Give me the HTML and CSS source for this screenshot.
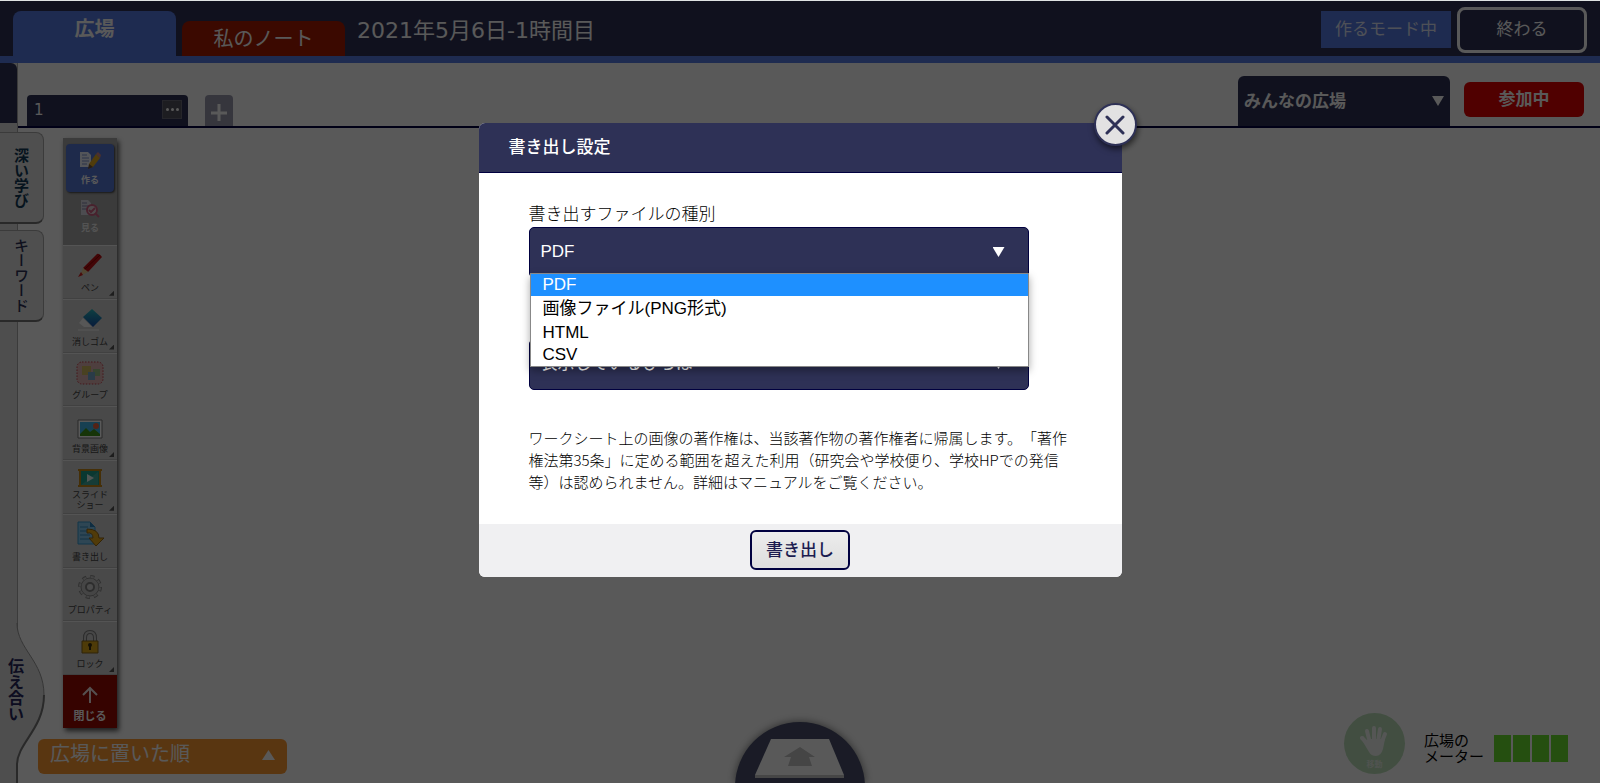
FILE: index.html
```html
<!DOCTYPE html>
<html lang="ja">
<head>
<meta charset="utf-8">
<title>書き出し設定</title>
<link rel="stylesheet" href="styles.css">
</head>
<body>
<div class="page">
  <header class="header">
    <nav class="header-tabs">
      <button class="header-tab header-tab-plaza" type="button">広場</button>
      <button class="header-tab header-tab-note" type="button">私のノート</button>
    </nav>
    <h1 class="lesson">2021年5月6日-1時間目</h1>
    <span class="mode">作るモード中</span>
    <button class="finish" type="button">終わる</button>
  </header>

  <div class="workspace">
    <aside class="rail">
      <div class="rail-head"></div>
      <button class="rail-tab rail-tab-deep" type="button">深い学び</button>
      <button class="rail-tab" type="button">キーワード</button>
      <div class="rail-bulge">
        <svg class="rail-curve" width="46" height="160" viewBox="0 0 46 160" aria-hidden="true">
          <path d="M0 0H17C17 26 44 38 44 72C44 106 17 120 17 142V160H0Z" fill="#dedede"/>
          <path d="M17 0C17 26 44 38 44 72" fill="none" stroke="#999" stroke-width="1"/>
          <path d="M44 72C44 106 17 120 17 142V160" fill="none" stroke="#777" stroke-width="2"/>
        </svg>
        <button class="rail-talk" type="button">伝え合い</button>
      </div>
    </aside>

    <main class="main">
      <div class="tabbar">
        <div class="sheet-tab"><span>1</span><button class="more" type="button" aria-label="メニュー"><i></i><i></i><i></i></button></div>
        <button class="add" type="button" aria-label="追加"><svg width="18" height="18" viewBox="0 0 18 18"><path d="M9 1V18M1 10H17" stroke="#fff" stroke-width="3"/></svg></button>
        <div class="plaza">
          <select class="plaza-select" aria-label="広場"><option>みんなの広場</option></select>
        </div>
        <button class="join" type="button">参加中</button>
      </div>

      <div class="toolbar">
        <div class="modes">
          <button class="tool mode-make" type="button">
            <svg width="22" height="20" viewBox="0 0 22 20"><path d="M1 2H9L12 5V17H1Z" fill="#eef2ff"/><path d="M3 5H8M3 8H10M3 11H10M3 14H8" stroke="#7d93cf"/><path d="M10 14L17 4L21 8L14 17L10 18Z" fill="#e5ab22"/><path d="M17 4L19 2L22 5L21 8Z" fill="#d98b80"/><path d="M10 14L14 17L9 19Z" fill="#715335"/></svg>
            作る</button>
          <button class="tool mode-view" type="button">
            <svg width="22" height="20" viewBox="0 0 22 20"><path d="M2 2H9L12 5V17H2Z" fill="#d9d9e6"/><path d="M3 5H8M3 8H10M3 11H8" stroke="#8584ac"/><circle cx="13" cy="12" r="5" fill="#e3d6db" stroke="#cf6082" stroke-width="2"/><path d="M16 15L20 19M10 12L12 14L16 10" fill="none" stroke="#cf6082" stroke-width="2"/></svg>
            見る</button>
        </div>
        <div class="tools">
          <button class="tool more-tools" type="button">
            <svg width="26" height="26" viewBox="0 0 26 26"><path d="M6 16L20 2Q22 1 25 5L11 20Z" fill="#c01013"/><path d="M7 18L23 3" stroke="#870000" stroke-width="1"/><path d="M6 16L11 20L3 24Z" fill="#e8cb92"/><path d="M4 20L6 23L1 25Z" fill="#d02020"/></svg>
            ペン</button>
          <button class="tool more-tools" type="button">
            <svg width="26" height="24" viewBox="0 0 26 24"><defs><linearGradient id="eraser" x2="0" y2="1"><stop stop-color="#27b5bb"/><stop offset="1" stop-color="#174fac"/></linearGradient></defs><path d="M15 1L25 10L16 19L6 9Z" fill="url(#eraser)"/><path d="M6 10L15 19H7L2 15Z" fill="#f8f8f8"/><path d="M1 22H22" stroke="#f8f8f8"/></svg>
            消しゴム</button>
          <button class="tool" type="button">
            <svg width="28" height="24" viewBox="0 0 28 24"><rect x="1" y="1" width="26" height="22" rx="5" fill="#deb4b4" stroke="#c8404c" stroke-width="1" stroke-dasharray="1.5 1.5"/><path d="M6 5H15V14H6Z" fill="#d0bb5e"/><path d="M17 8H24V15H17Z" fill="#9cc486"/><path d="M12 11H19V19H12Z" fill="#7aa9cb"/></svg>
            グループ</button>
          <button class="tool more-tools" type="button">
            <svg width="26" height="20" viewBox="0 0 26 20"><path d="M1 1H25V19H1Z" fill="#fff" stroke="#777"/><path d="M3 3H23V17H3Z" fill="#43b8ea"/><path d="M3 15L9 9L13 13L17 10L23 15V17H3Z" fill="#3f9619"/><circle cx="19" cy="7" r="3" fill="#ef6541"/></svg>
            背景画像</button>
          <button class="tool more-tools slide" type="button">
            <svg width="24" height="18" viewBox="0 0 24 18"><path d="M2 1H22V17H2Z" fill="#1da08e"/><path d="M3 16L20 3V16Z" fill="#40ad9e"/><path d="M0 1H24M0 17H24M2 1V17M22 1V17" stroke="#c58715" stroke-width="2"/><path d="M9 5V13L16 9Z" fill="#e5f5f1"/></svg>
            <span>スライド<br>ショー</span></button>
          <button class="tool" type="button">
            <svg width="28" height="26" viewBox="0 0 28 26"><path d="M2 1H14L19 6V23H2Z" fill="#83c9f1" stroke="#369bd0"/><path d="M14 1V6H19Z" fill="#2c82b9"/><path d="M4 6H12M4 10H16M4 14H14M4 18H14" stroke="#398fc1"/><path d="M11 8Q23 8 23 17H28L20 25L13 17H17Q17 11 11 12Z" fill="#e9aa1c" stroke="#966815"/></svg>
            書き出し</button>
          <button class="tool" type="button">
            <svg width="26" height="26" viewBox="0 0 26 26"><circle cx="13" cy="13" r="10" fill="none" stroke="#8a8a8a" stroke-width="4" stroke-dasharray="4 3.85"/><circle cx="13" cy="13" r="9" fill="#c5c5c5" stroke="#8a8a8a"/><circle cx="13" cy="13" r="10" fill="none" stroke="#c5c5c5" stroke-width="2" stroke-dasharray="3 4.85" stroke-dashoffset="-.5"/><circle cx="13" cy="13" r="4" fill="#d8d8d8" stroke="#808080" stroke-width="2"/></svg>
            プロパティ</button>
          <button class="tool more-tools" type="button">
            <svg width="18" height="24" viewBox="0 0 18 24"><path d="M4 12V8Q4 2 9 2Q14 2 14 8V12" fill="none" stroke="#7e7e7e" stroke-width="4"/><path d="M4 12V8Q4 2 9 2Q14 2 14 8V12" fill="none" stroke="#ccc" stroke-width="2"/><path d="M1 11H17V23H1Z" fill="#dfaa19" stroke="#85651b"/><circle cx="9" cy="15" r="2" fill="#3b3010"/><path d="M8 16H10V20H8Z" fill="#3b3010"/></svg>
            ロック</button>
        </div>
        <button class="tool close-tools" type="button">
          <svg width="18" height="18" viewBox="0 0 18 18"><path d="M9 17V2M2 9L9 2L16 9" fill="none" stroke="#f3e6e4" stroke-width="2"/></svg>
          閉じる</button>
      </div>
    </main>
  </div>

  <footer class="dock">
    <button class="order" type="button"><span>広場に置いた順</span><i class="up"></i></button>
    <div class="status">
      <button class="move" type="button">
        <svg width="30" height="32" viewBox="0 0 30 32"><path d="M10 20L3 13M11 18L8 6M15 17V3M19 17L21 4M22 19L26 9" stroke="#f2f5f2" stroke-width="4" stroke-linecap="round"/><path d="M1 12L10 27Q12 31 17 31Q22 31 24 24L26 14L20 14H10L9 17L4 11Z" fill="#f2f5f2"/></svg>
        移動</button>
      <span class="meter-label">広場の<br>メーター</span>
      <div class="meter" role="img" aria-label="広場のメーター"><i></i><i></i><i></i><i></i></div>
    </div>
  </footer>
  <button class="tray" type="button" aria-label="提出">
    <svg width="130" height="61" viewBox="0 0 130 61"><circle cx="65" cy="65" r="65" fill="#4a4f6d"/><path d="M36 17H94L109 53V56H20V53Z" fill="#fff"/><path d="M20 53H109V56H20Z" fill="#c9c9c9"/><path d="M65 25L80 35H74L77 44H53L56 35H49Z" fill="#c5c5c5"/></svg>
  </button>
</div>

<div class="overlay">
  <form class="modal" role="dialog" aria-labelledby="modal-title">
    <div class="modal-head"><h2 id="modal-title">書き出し設定</h2></div>
    <button class="modal-close" type="button" aria-label="閉じる"><svg width="20" height="20" viewBox="0 0 20 20"><path d="M2 2L18 18M18 2L2 18" stroke="#2e3156" stroke-width="3" stroke-linecap="round"/></svg></button>
    <div class="modal-body">
      <label class="field-label" for="kind">書き出すファイルの種別</label>
      <div class="field">
        <select class="field-select" id="kind"><option>PDF</option></select>
        <ul class="options" role="listbox">
          <li class="option selected" role="option" aria-selected="true">PDF</li>
          <li class="option option-tall" role="option">画像ファイル(PNG形式)</li>
          <li class="option" role="option">HTML</li>
          <li class="option" role="option">CSV</li>
        </ul>
      </div>
      <div class="field field-target">
        <select class="field-select" aria-label="対象"><option>表示しているひろば</option></select>
      </div>
      <p class="notice">ワークシート上の画像の著作権は、当該著作物の著作権者に帰属します。「著作権法第35条」に定める範囲を超えた利用（研究会や学校便り、学校HPでの発信等）は認められません。詳細はマニュアルをご覧ください。</p>
    </div>
    <div class="modal-foot"><button class="export" type="button">書き出し</button></div>
  </form>
</div>
</body>
</html>
```

FILE: styles.css
```css
* { box-sizing: border-box; }

body {
  margin: 0;
  font-family: "Noto Sans CJK JP", sans-serif;
  font-size: 17px;
  overflow: hidden;
}

button, select {
  font: inherit;
  color: inherit;
  border: 0;
  margin: 0;
  padding: 0;
  background: none;
}

h1, h2, p, ul { margin: 0; padding: 0; font-weight: 400; }
svg { display: block; flex: none; }

.page {
  position: relative;
  display: flex;
  flex-direction: column;
  min-height: 100vh;
  border-top: 1px solid #dfe3e3;
  overflow: hidden;
}

/* header */
.header {
  display: flex;
  align-items: flex-end;
  height: 62px;
  padding: 0 13px;
  background: #2e3358;
  border-bottom: 7px solid #587be4;
  color: #fff;
}
.header-tabs { display: flex; align-items: flex-end; gap: 6px; }
.header-tab { width: 163px; border-radius: 8px 8px 0 0; font-size: 20px; }
.header-tab-plaza { height: 45px; padding-bottom: 12px; background: #587be4; font-weight: 700; }
.header-tab-note { height: 35px; padding-bottom: 2px; background: #a81c00; }
.lesson {
  flex: 1;
  align-self: center;
  padding: 4px 0 0 12px;
  font: 22px/30px "DejaVu Sans", "Noto Sans CJK JP", sans-serif;
}
.mode {
  align-self: flex-start;
  width: 130px;
  height: 37px;
  margin: 10px 6px 0 0;
  background: #587be4;
  line-height: 34px;
  text-align: center;
  color: #dfe5f8;
}
.finish {
  align-self: flex-start;
  width: 130px;
  height: 46px;
  margin-top: 6px;
  padding-bottom: 6px;
  border: 3px solid #fff;
  border-radius: 8px;
}

/* left rail */
.workspace { flex: 1; display: flex; }
.rail {
  position: relative;
  z-index: 1;
  flex: none;
  display: flex;
  flex-direction: column;
  align-items: flex-start;
  width: 18px;
  background: #dedede;
  border-right: 1px solid #aaa;
}
.rail-head { width: 17px; height: 60px; background: #2e3358; border-radius: 0 6px 0 0; }
.rail-tab {
  width: 44px;
  height: 92px;
  margin-top: 6px;
  border: 1px solid #aaa;
  border-left: 0;
  border-bottom: 2px solid #777;
  border-radius: 0 8px 8px 0;
  background: #e2e2e2;
  color: #2e3358;
  font-size: 15px;
  font-weight: 500;
  line-height: 44px;
  writing-mode: vertical-rl;
}
.rail-tab-deep { margin-top: 9px; color: #123a58; font-weight: 700; }
.rail-bulge { position: relative; margin-top: auto; }
.rail-talk {
  position: absolute;
  left: 8px;
  top: 34px;
  height: 66px;
  color: #25255c;
  font-size: 16px;
  font-weight: 700;
  line-height: 16px;
  writing-mode: vertical-rl;
}

/* sheet tabs */
.main { flex: 1; display: flex; flex-direction: column; background: #fff; }
.tabbar {
  display: flex;
  align-items: flex-end;
  height: 65px;
  padding: 0 16px 0 9px;
  border-bottom: 2px solid #00003f;
}
.sheet-tab {
  display: flex;
  align-items: center;
  justify-content: space-between;
  width: 161px;
  height: 31px;
  padding: 0 6px 2px 7px;
  border-radius: 4px 4px 0 0;
  background: #2e3358;
  color: #fff;
  font: 15px/20px "DejaVu Sans", sans-serif;
}
.more {
  display: flex;
  align-items: center;
  justify-content: center;
  gap: 2px;
  width: 20px;
  height: 19px;
  border: 1px solid #6c6c7a;
  background: #55555f;
}
.more i { width: 3px; height: 3px; border-radius: 50%; background: #fff; }
.add {
  display: grid;
  place-items: center;
  width: 28px;
  height: 31px;
  margin-left: 17px;
  padding-top: 2px;
  border-radius: 4px 4px 0 0;
  background: #9b9ab0;
}
.plaza { position: relative; width: 212px; margin-left: auto; }
.plaza-select {
  display: block;
  appearance: none;
  width: 100%;
  height: 50px;
  padding: 0 6px 4px;
  border-radius: 6px 6px 0 0;
  background: #2e3358;
  color: #fff;
  font-weight: 700;
}
.plaza::after, .field::after {
  content: "";
  position: absolute;
  right: 6px;
  top: 20px;
  width: 12px;
  height: 10px;
  background: #fff;
  clip-path: polygon(0 0, 100% 0, 50% 100%);
}
.join {
  width: 120px;
  height: 35px;
  margin: 0 0 9px 14px;
  padding-bottom: 5px;
  border-radius: 6px;
  background: #e60000;
  color: #fff;
  font-weight: 700;
}

/* drawing tools */
.toolbar {
  width: 54px;
  margin: 10px 0 0 45px;
  background: #d0d0d0;
  box-shadow: 2px 3px 5px #555;
}
.modes { display: flex; flex-direction: column; align-items: center; height: 107px; padding-top: 6px; background: #a8a8a8; }
.tool {
  position: relative;
  display: flex;
  flex-direction: column;
  align-items: center;
  justify-content: flex-end;
  width: 100%;
  padding-bottom: 3px;
  color: #444;
  font-size: 9px;
  line-height: 14px;
  gap: 3px;
}
.mode-make {
  width: 48px;
  height: 48px;
  padding-bottom: 5px;
  border-radius: 4px;
  background: #5778d8;
  box-shadow: 1px 1px 2px #444;
  color: #fff;
  font-weight: 700;
}
.mode-view { height: 48px; padding-bottom: 5px; color: #eee; font-weight: 700; }
.tools { display: grid; grid-auto-rows: 1fr; height: 430px; }
.tools .tool { border-top: 1px solid #efefef; border-bottom: 1px solid #bbb; }
.more-tools::after {
  content: "";
  position: absolute;
  right: 3px;
  bottom: 2px;
  width: 5px;
  height: 5px;
  background: #555;
  clip-path: polygon(100% 0, 100% 100%, 0 100%);
}
.tools .slide { line-height: 10px; }
.close-tools { height: 53px; padding-bottom: 6px; background: #9a0a00; color: #fff; font-size: 11px; font-weight: 700; gap: 4px; }

/* floating controls over the bottom of the canvas */
.dock {
  position: absolute;
  z-index: 2;
  left: 38px;
  right: 32px;
  bottom: 9px;
  display: flex;
  align-items: flex-end;
  justify-content: space-between;
  pointer-events: none;
}
.order {
  display: flex;
  align-items: center;
  justify-content: space-between;
  width: 249px;
  height: 35px;
  padding: 0 12px 7px;
  border-radius: 6px;
  background: #ff9a33;
  color: #fff;
  font-size: 20px;
  line-height: 28px;
}
.up { width: 13px; height: 10px; margin-top: 4px; background: #fff; clip-path: polygon(50% 0, 100% 100%, 0 100%); }
.status { display: flex; align-items: center; }
.move {
  display: flex;
  flex-direction: column;
  align-items: center;
  justify-content: flex-end;
  width: 61px;
  height: 61px;
  padding-bottom: 3px;
  border-radius: 50%;
  background: #bce0ba;
  color: #e5eee5;
  font-size: 8px;
  font-weight: 700;
  line-height: 14px;
}
.meter-label { margin: 8px 10px 0 19px; font-size: 15px; line-height: 16px; }
.meter { display: flex; gap: 2px; margin-top: 10px; }
.meter i { width: 17px; height: 27px; background: #6ae22e; }
.tray { position: absolute; left: 50%; bottom: 0; margin-left: -65px; filter: drop-shadow(0 0 4px #777); }

/* dialog */
.overlay {
  position: fixed;
  z-index: 10;
  inset: 1px 0 0;
  display: flex;
  align-items: flex-start;
  justify-content: center;
  padding-top: 122px;
  background: rgba(0, 0, 0, 0.65);
}
.modal { position: relative; width: 643px; border-radius: 6px; background: #fff; }
.modal-head {
  padding: 10px 30px 14px;
  border-bottom: 1px solid #00003f;
  border-radius: 6px 6px 0 0;
  background: #2e3156;
  color: #fff;
}
.modal-head h2 { font-size: 17px; font-weight: 500; line-height: 25px; }
.modal-close {
  position: absolute;
  right: -15px;
  top: -20px;
  display: grid;
  place-items: center;
  width: 43px;
  height: 43px;
  border: 2px solid #2e3156;
  border-radius: 50%;
  background: #e2e2e2;
  box-shadow: 1px 3px 6px rgba(0, 0, 0, 0.6);
}
.modal-body { padding: 26px 50px 31px; }
.field-label { display: block; font-weight: 300; line-height: 28px; }
.field { position: relative; max-width: 500px; }
.field-target { margin-top: 61px; }
.field::after { right: 24px; }
.field-select {
  display: block;
  appearance: none;
  width: 100%;
  height: 51px;
  padding: 0 11px 2px;
  border: 1px solid #00003f;
  border-radius: 5px;
  background: #2e3156;
  color: #fff;
  font-family: "Liberation Sans", "Noto Sans CJK JP", sans-serif;
}
.options {
  position: absolute;
  z-index: 1;
  left: 1px;
  right: 0;
  top: 46px;
  border: 1px solid #888;
  background: #fff;
  box-shadow: 0 4px 8px rgba(0, 0, 0, 0.35);
  list-style: none;
  font-family: "Liberation Sans", "Noto Sans CJK JP", sans-serif;
}
.option { padding-left: 12px; line-height: 22px; }
.option-tall { line-height: 26px; }
.selected { background: #1e90ff; color: #fff; }
.notice {
  padding-top: 37px;
  font-size: 15px;
  font-weight: 300;
  line-height: 22px;
  text-spacing-trim: space-all;
}
.modal-foot {
  display: flex;
  justify-content: center;
  padding: 6px 0 7px;
  border-radius: 0 0 6px 6px;
  background: #f0f0f2;
}
.export {
  width: 100px;
  height: 40px;
  padding-bottom: 3px;
  border: 2px solid #00003f;
  border-radius: 6px;
  background: linear-gradient(#ececec, #dedede);
  color: #1c1c50;
  font-weight: 500;
}
```
